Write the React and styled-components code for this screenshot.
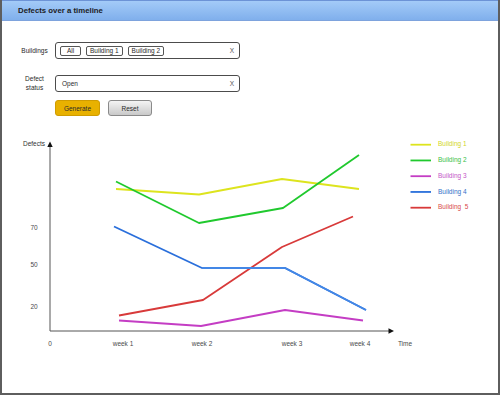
import styled, { createGlobalStyle } from 'styled-components';

const GlobalStyle = createGlobalStyle`
  html, body {
    margin: 0;
    padding: 0;
    background: #fff;
  }
  body {
    font-family: "Liberation Sans", Arial, sans-serif;
  }
`;

const Frame = styled.div`
  box-sizing: border-box;
  width: 500px;
  height: 395px;
  border: 2px solid #5e5e5e;
  border-top: none;
  display: flex;
  flex-direction: column;
  overflow: hidden;
`;

const Header = styled.div`
  height: 21px;
  flex: none;
  box-sizing: border-box;
  border-top: 1px solid #6c93d6;
  border-bottom: 1px solid #7ea3dd;
  background: linear-gradient(#a3cbf8, #80afec);
  display: flex;
  align-items: center;
  padding-left: 16px;
`;

const Title = styled.span`
  font-size: 7.8px;
  font-weight: bold;
  color: #1c1c24;
`;

const Form = styled.div`
  display: flex;
  flex-direction: column;
  padding: 21px 0 0 12px;
  font-size: 6.5px;
  color: #2a2a2a;
`;

const FieldRow = styled.div`
  display: grid;
  grid-template-columns: 41px 185px;
  align-items: center;
  height: 17px;
  & + & {
    margin-top: 15px;
  }
`;

const Label = styled.div`
  text-align: center;
  line-height: 9px;
`;

const Field = styled.div`
  box-sizing: border-box;
  height: 17px;
  border: 1px solid #4c4c4c;
  border-radius: 3px;
  display: flex;
  align-items: center;
  gap: 5px;
  padding: 0 5px 0 4px;
`;

const Chip = styled.span`
  box-sizing: border-box;
  height: 10px;
  min-width: 21px;
  padding: 0 3px;
  border: 1px solid #555;
  border-radius: 2px;
  display: flex;
  align-items: center;
  justify-content: center;
`;

const Value = styled.span`
  padding-left: 2px;
`;

const Clear = styled.span`
  margin-left: auto;
  font-size: 6.5px;
  color: #555;
`;

const ButtonRow = styled.div`
  display: flex;
  gap: 8px;
  margin: 9px 0 0 41px;
`;

const Button = styled.button`
  box-sizing: border-box;
  height: 16px;
  width: ${p => (p.$primary ? '45px' : '44px')};
  padding: 0;
  border-radius: 3px;
  font-family: inherit;
  font-size: 6.5px;
  color: #2a2a2a;
  border: 1px solid ${p => (p.$primary ? '#d09c00' : '#8a8a8a')};
  background: ${p =>
    p.$primary ? '#e8b100' : 'linear-gradient(#f4f4f4, #c9c9c9)'};
`;

const Chart = styled.svg`
  display: block;
  flex: none;
  margin-top: 14px;
  font-family: "Liberation Sans", Arial, sans-serif;
  font-size: 6.5px;
`;

const series = [
  { name: 'Building 1', line: '#dde41e', text: '#d2d61c', pts: [[116, 189], [199, 194.5], [282, 179], [359, 189]] },
  { name: 'Building 2', line: '#20c92e', text: '#3cc048', pts: [[116, 181.5], [199, 223], [283, 208], [359, 155]] },
  { name: 'Building 3', line: '#c43dc4', text: '#c456c8', pts: [[119, 320.5], [201, 326], [285, 310], [363, 320.5]] },
  { name: 'Building 4', line: '#2a6fdb', text: '#3470c8', pts: [[114, 226.5], [202, 268], [285, 268], [366, 310]] },
  { name: 'Building  5', line: '#d83a3a', text: '#d84a4a', pts: [[119, 315.5], [203, 300], [282, 247], [353, 216.5]] },
];

const yTicks = [
  ['70', 228],
  ['50', 265],
  ['20', 307],
];

const xTicks = [
  ['0', 50],
  ['week 1', 123],
  ['week 2', 202],
  ['week 3', 292],
  ['week 4', 360],
  ['Time', 405],
];

const TimelineChart = () => (
  <Chart width="496" height="263" viewBox="2 130 496 263">
    <line x1="50" y1="146" x2="50" y2="331" stroke="#555" strokeWidth="1" />
    <polygon points="50,141.5 47.3,147 52.7,147" fill="#111" />
    <line x1="50" y1="331" x2="389" y2="331" stroke="#555" strokeWidth="1" />
    <polygon points="394,331 388.5,328.3 388.5,333.7" fill="#111" />

    <text x="45" y="144.5" textAnchor="end" dominantBaseline="middle" fill="#333">Defects</text>
    {yTicks.map(([t, y]) => (
      <text key={t} x="34" y={y} textAnchor="middle" dominantBaseline="middle" fill="#4a4a4a">{t}</text>
    ))}
    {xTicks.map(([t, x]) => (
      <text key={t} x={x} y="344" textAnchor="middle" dominantBaseline="middle" fill="#4a4a4a">{t}</text>
    ))}

    {series.map(s => (
      <polyline
        key={s.name}
        points={s.pts.map(p => p.join(',')).join(' ')}
        fill="none"
        stroke={s.line}
        strokeWidth="1.8"
        strokeLinejoin="round"
      />
    ))}
    <polyline points="202,268 285,268 366,310" fill="none" stroke="#4387e6" strokeWidth="1.8" />

    {series.map((s, i) => (
      <g key={s.name}>
        <line x1="410.5" y1={144.7 + i * 15.75} x2="431" y2={144.7 + i * 15.75} stroke={s.line} strokeWidth="1.8" />
        <text x="438" y={144.7 + i * 15.75} dominantBaseline="middle" fill={s.text} xmlSpace="preserve">{s.name}</text>
      </g>
    ))}
  </Chart>
);

const App = () => (
  <>
    <GlobalStyle />
    <Frame>
      <Header>
        <Title>Defects over a timeline</Title>
      </Header>
      <Form>
        <FieldRow>
          <Label>Buildings</Label>
          <Field>
            <Chip>All</Chip>
            <Chip>Building 1</Chip>
            <Chip>Building 2</Chip>
            <Clear>X</Clear>
          </Field>
        </FieldRow>
        <FieldRow>
          <Label>Defect<br />status</Label>
          <Field>
            <Value>Open</Value>
            <Clear>X</Clear>
          </Field>
        </FieldRow>
        <ButtonRow>
          <Button $primary>Generate</Button>
          <Button>Reset</Button>
        </ButtonRow>
      </Form>
      <TimelineChart />
    </Frame>
  </>
);

export default App;
